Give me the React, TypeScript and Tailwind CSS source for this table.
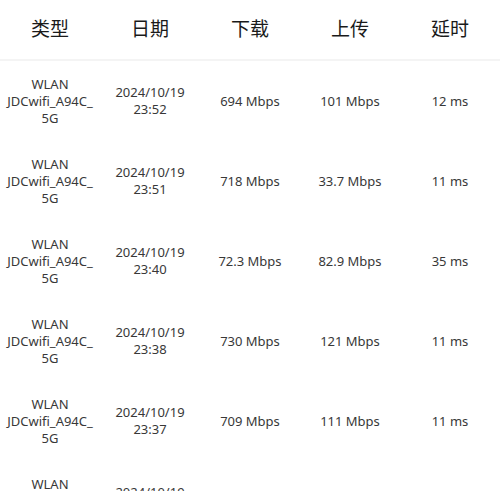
import React from 'react';

const rows = [
  { date: '2024/10/19', time: '23:52', down: '694 Mbps', up: '101 Mbps', ping: '12 ms' },
  { date: '2024/10/19', time: '23:51', down: '718 Mbps', up: '33.7 Mbps', ping: '11 ms' },
  { date: '2024/10/19', time: '23:40', down: '72.3 Mbps', up: '82.9 Mbps', ping: '35 ms' },
  { date: '2024/10/19', time: '23:38', down: '730 Mbps', up: '121 Mbps', ping: '11 ms' },
  { date: '2024/10/19', time: '23:37', down: '709 Mbps', up: '111 Mbps', ping: '11 ms' },
  { date: '2024/10/19', time: '23:35', down: '705 Mbps', up: '118 Mbps', ping: '11 ms' },
];

const headers = ['类型', '日期', '下载', '上传', '延时'];

export default function App() {
  return (
    <div className="w-[500px] h-[491px] overflow-hidden bg-white text-[#383838] font-['Noto_Sans','Noto_Sans_CJK_SC',sans-serif]">
      <div className="grid grid-cols-5 h-[61px] items-center border-b-2 border-[#f4f4f4]">
        {headers.map((h) => (
          <div key={h} className="text-center text-[19px] text-[#1a1a1a] font-['Noto_Sans_CJK_SC',sans-serif] pb-[3px]">
            {h}
          </div>
        ))}
      </div>
      {rows.map((r, i) => (
        <div key={i} className="grid grid-cols-5 h-[80px] items-center text-center text-[13px] leading-[17px]">
          <div>
            WLAN
            <br />
            JDCwifi_A94C_
            <br />
            5G
          </div>
          <div>
            {r.date}
            <br />
            {r.time}
          </div>
          <div>{r.down}</div>
          <div>{r.up}</div>
          <div>{r.ping}</div>
        </div>
      ))}
    </div>
  );
}
